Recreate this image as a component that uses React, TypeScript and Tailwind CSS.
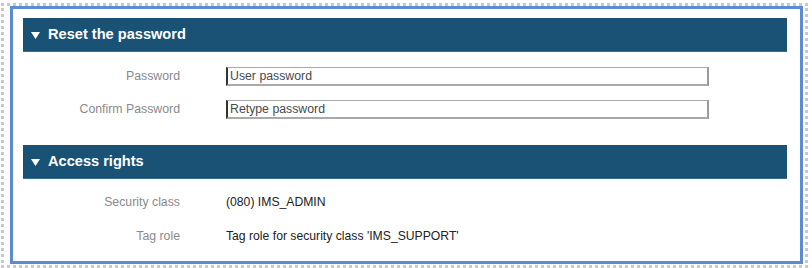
import React from "react";

const font = { fontFamily: '"Liberation Sans", Arial, sans-serif' };

function SectionHeader({ title }: { title: string }) {
  return (
    <div className="ml-[10px] mr-[13px] h-[34px] bg-[#1a5276] border-b border-[#3a6e93] flex items-center pl-[8px]">
      <svg width="9" height="8" viewBox="0 0 9 8" className="mt-[3px]">
        <polygon points="0,0 9,0 4.5,7" fill="#ffffff" />
      </svg>
      <span className="ml-[8px] text-white font-bold text-[14.6px] leading-none">
        {title}
      </span>
    </div>
  );
}

function PasswordRow({ label, placeholder }: { label: string; placeholder: string }) {
  return (
    <div className="flex items-center">
      <div className="w-[167px] text-right text-[12.3px] text-[#8a8a8a]">{label}</div>
      <input
        type="password"
        placeholder={placeholder}
        className="ml-[46px] w-[483px] h-[19px] bg-white border-t border-t-[#a9a9a9] border-l-2 border-l-[#333] border-r-2 border-r-[#9a9a9a] border-b-2 border-b-[#a9a9a9] px-[2px] text-[12.3px] text-[#444] placeholder:text-[#4a4a4a] outline-none"
      />
    </div>
  );
}

function InfoRow({ label, value }: { label: string; value: string }) {
  return (
    <div className="h-[34px] flex items-center">
      <div className="w-[167px] text-right text-[12.3px] text-[#8a8a8a]">{label}</div>
      <div className="ml-[46px] text-[12.2px] text-[#222]">{value}</div>
    </div>
  );
}

export default function App() {
  return (
    <div className="w-[812px] h-[268px] bg-white pt-[3px] pl-[1px]" style={font}>
      <div className="w-[807px] h-[265px] border-[3px] border-dotted border-[#c8c8c8] pl-[6px] pr-[2px] pb-[1px] flex">
        <div className="flex-1 border-[3px] border-[#5b8bd0] bg-white pt-[9px]">
          <SectionHeader title="Reset the password" />
          <div className="pt-[15px] flex flex-col gap-[14px]">
            <PasswordRow label="Password" placeholder="User password" />
            <PasswordRow label="Confirm Password" placeholder="Retype password" />
          </div>
          <div className="h-[26px]" />
          <SectionHeader title="Access rights" />
          <div className="pt-[6px]">
            <InfoRow label="Security class" value="(080) IMS_ADMIN" />
            <InfoRow label="Tag role" value="Tag role for security class 'IMS_SUPPORT'" />
          </div>
        </div>
      </div>
    </div>
  );
}
